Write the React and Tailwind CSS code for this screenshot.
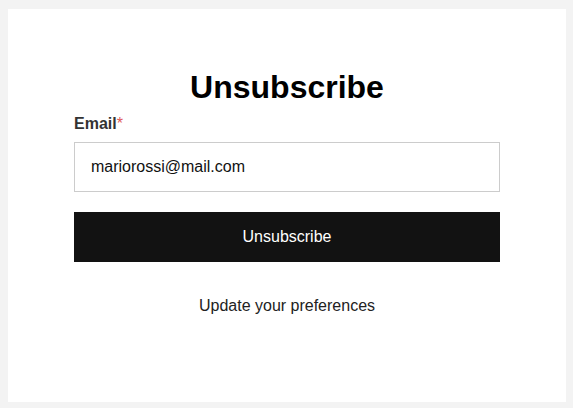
import React from 'react';

export default function App() {
  return (
    <div className="min-h-screen bg-[#f3f3f3] pl-2 pt-[9px] font-['Liberation_Sans',Arial,sans-serif]">
      <div className="w-[558px] h-[393px] bg-white pt-[58px]">
        <div className="mx-auto w-[426px]">
          <h1 className="text-center text-[32px] leading-[40px] font-bold text-black mb-[7px]">
            Unsubscribe
          </h1>
          <form onSubmit={(e) => e.preventDefault()}>
            <label htmlFor="email" className="block text-[16px] leading-[20px] font-bold text-[#333333] mb-2">
              Email<span className="text-[#e05a5a] font-normal">*</span>
            </label>
            <input
              id="email"
              type="email"
              defaultValue="mariorossi@mail.com"
              className="block w-full h-[50px] border border-[#cccccc] px-4 text-[16px] text-[#111111] outline-none"
            />
            <button
              type="submit"
              className="mt-5 block w-full h-[50px] bg-[#121212] text-white text-[16px]"
            >
              Unsubscribe
            </button>
          </form>
          <p className="mt-[34px] text-center text-[16px] leading-[20px] text-[#222222]">
            Update your preferences
          </p>
        </div>
      </div>
    </div>
  );
}
